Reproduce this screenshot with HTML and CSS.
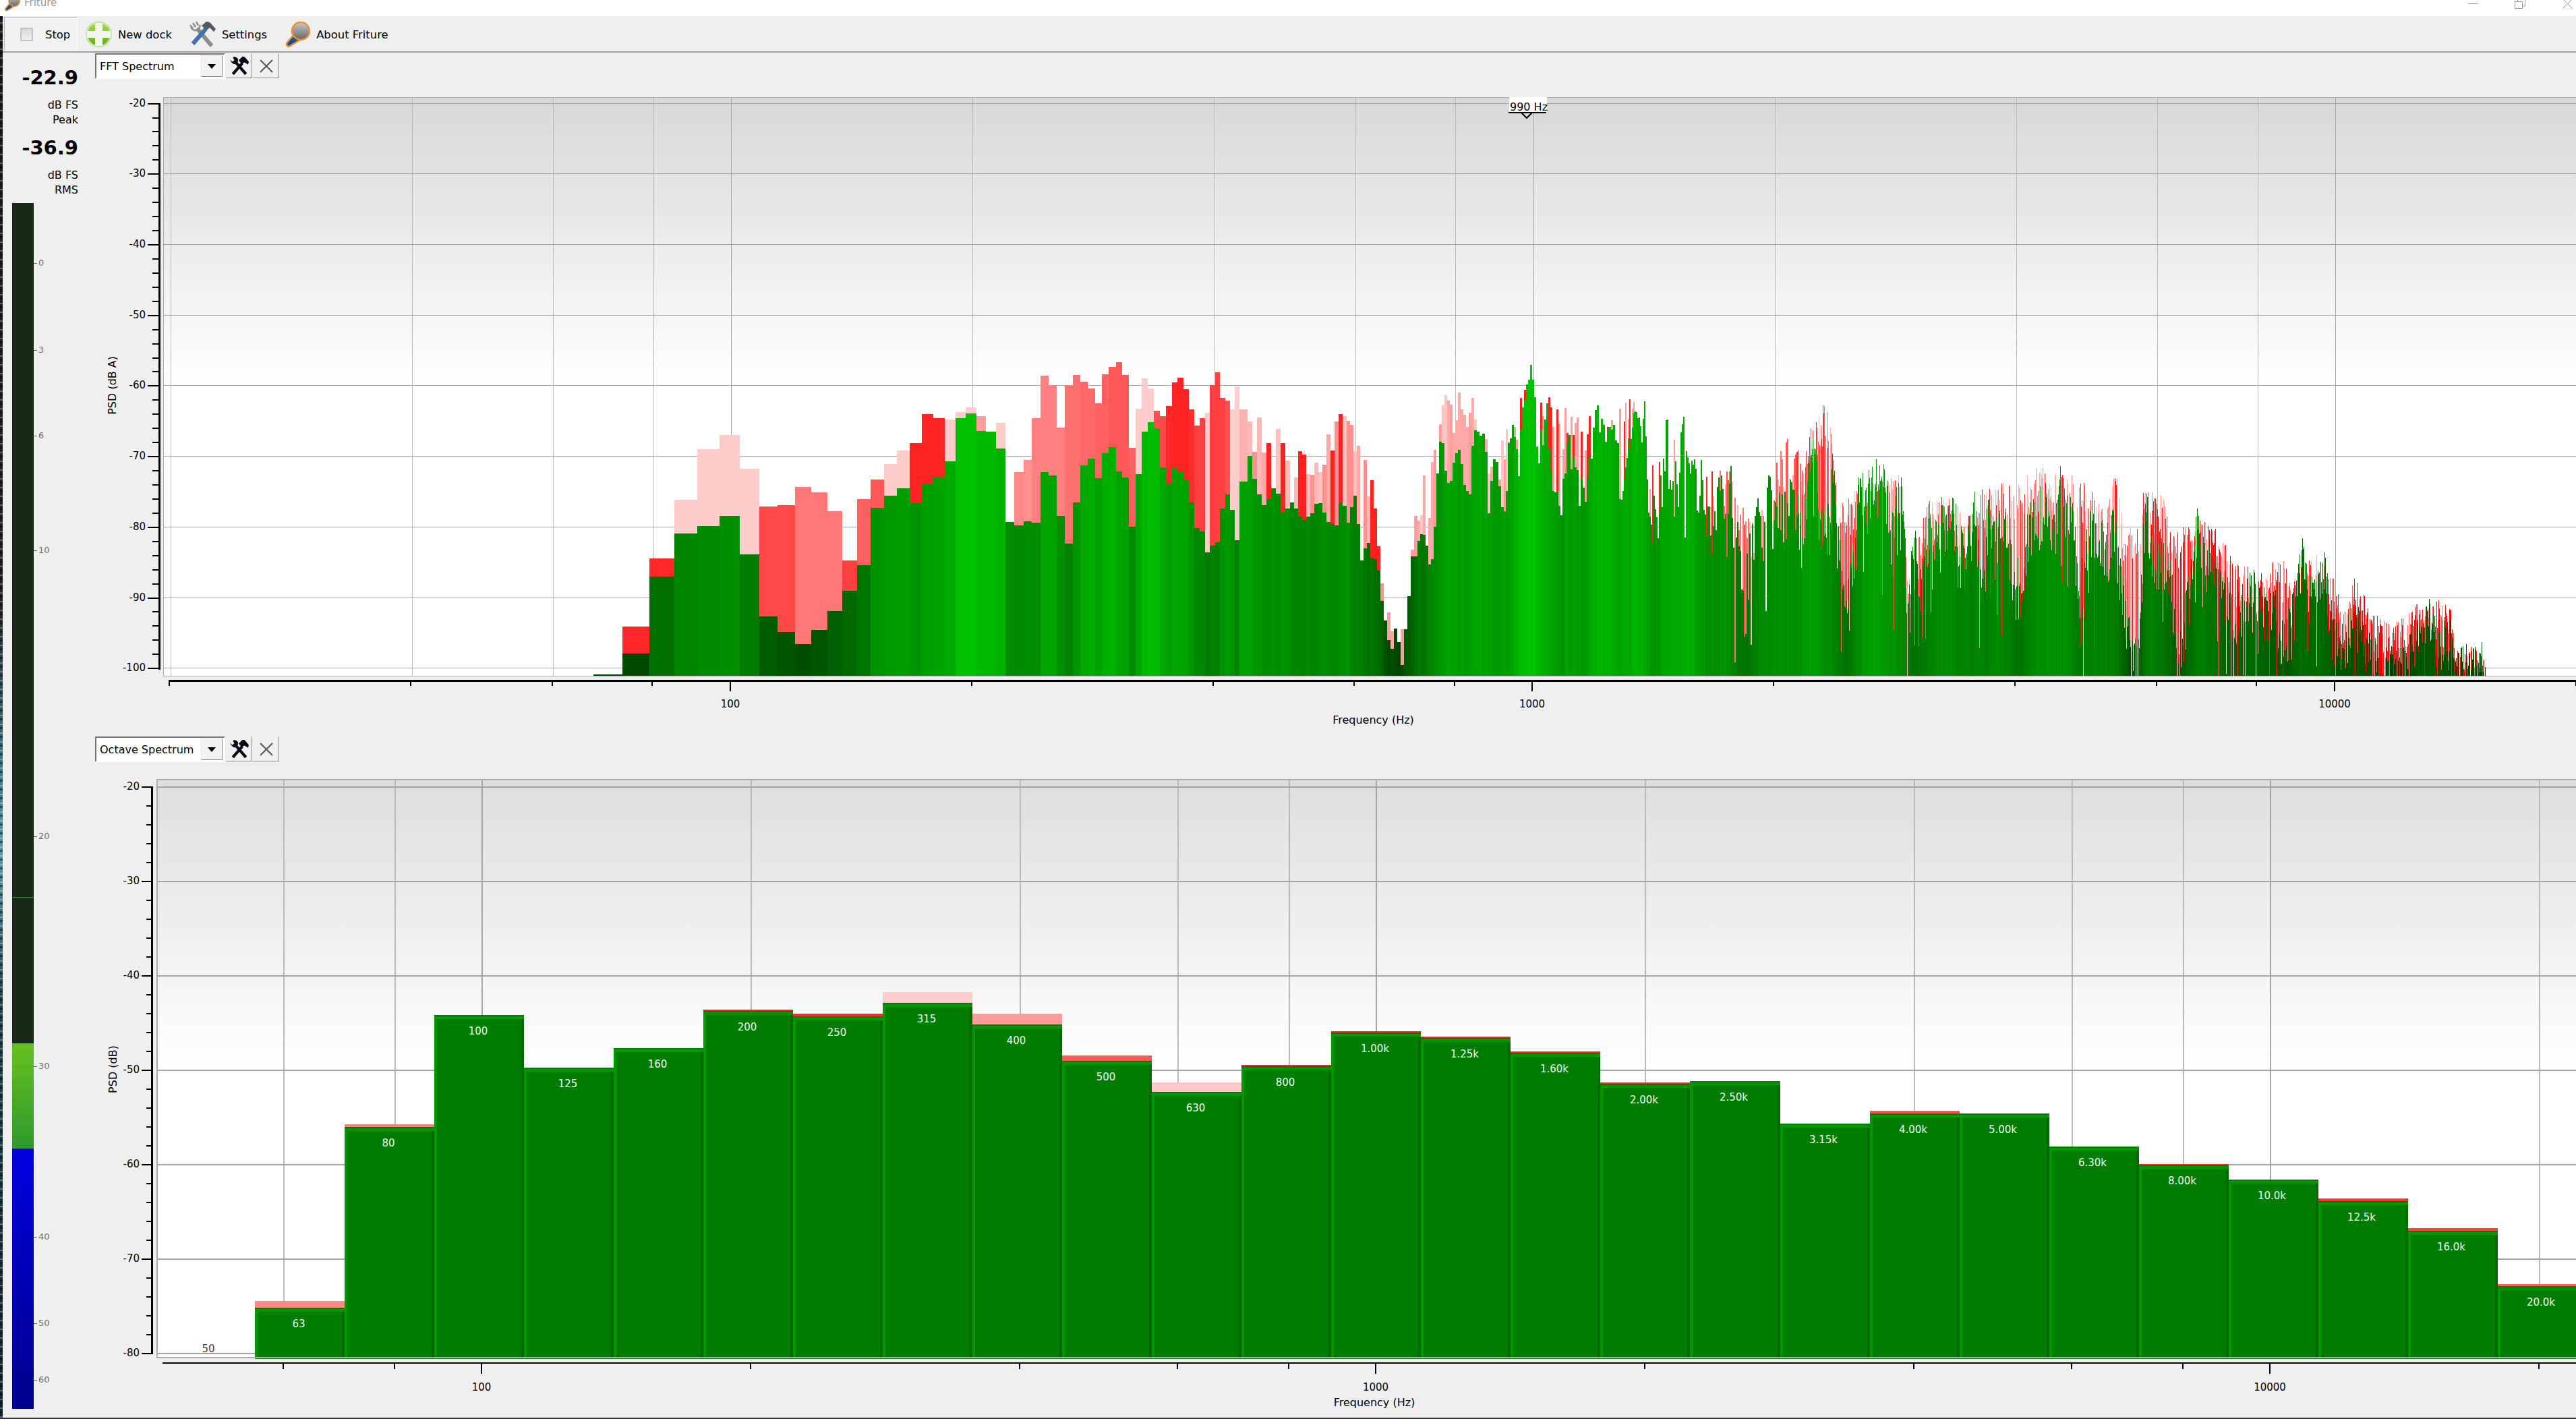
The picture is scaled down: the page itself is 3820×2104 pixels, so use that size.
FILE: index.html
```html
<!DOCTYPE html>
<html lang="en">
<head>
  <meta charset="UTF-8" />
  <title>Friture</title>
  <link rel="stylesheet" href="styles.css">
</head>
<body>
  <svg class="defs" width="0" height="0">
    <symbol id="icon-mic" viewBox="0 0 38 40">
      <path d="M14 20 L3 33 Q2 37 6 38 Q8 38 10 36 L25 27" fill="#1a4f9a" stroke="#f09030" stroke-width="2.5"/>
      <circle cx="24" cy="15" r="13" fill="url(#ball)" stroke="#f09030" stroke-width="2.5"/>
    </symbol>
    <symbol id="icon-tools" viewBox="0 0 26 26">
      <path d="M4 24 L17 9 M22 24 L9 9" fill="none" stroke="currentColor" stroke-width="4"/>
      <path d="M12 5 L17 0 L20 0 L26 7 L25 11 L20 8 L16 10 Z" fill="currentColor"/>
      <path d="M0 4 L3 7 L6 5 L4 1 Q8 -1 11 3 Q12 7 9 10 Q3 12 0 4 Z" fill="currentColor"/>
    </symbol>
    <linearGradient id="ball" x1="0" y1="0" x2="0" y2="1">
      <stop offset="0" stop-color="#c8c8c8"/>
      <stop offset="1" stop-color="#666"/>
    </linearGradient>
    <linearGradient id="plate" x1="0" y1="0" x2="0" y2="1">
      <stop offset="0" stop-color="#a0dc40"/>
      <stop offset="1" stop-color="#62b01c"/>
    </linearGradient>
  </svg>

  <header class="titlebar">
    <svg class="title-icon" width="24" height="25"><use href="#icon-mic"/></svg>
    <span class="title-text">Friture</span>
    <svg class="window-buttons" width="160" height="24" viewBox="0 0 160 24">
      <path d="M0 5.5 H15" stroke="#999" fill="none"/>
      <path d="M69.5 2.5 H80.5 V12.5 H69.5 Z M73.5 2 V-1 M84.5 -1 V9 H81" stroke="#999" fill="none"/>
      <path d="M140 -2 L155 13 M155 -2 L140 13" stroke="#999" fill="none"/>
    </svg>
  </header>

  <div class="workspace">
    <div class="desktop-edge"></div>
    <div class="window">
      <nav class="toolbar">
        <button class="tool tool-checked"><span class="checkbox"></span>Stop</button>
        <button class="tool">
          <svg width="39" height="40" viewBox="0 0 39 40">
            <circle cx="19.5" cy="20" r="19.5" fill="#c8e2a8"/>
            <circle cx="19.5" cy="20" r="16.5" fill="url(#plate)"/>
            <path d="M14 3 H25 V15 H37 V25 H25 V37 H14 V25 H2 V15 H14 Z" fill="#f4f4f0"/>
          </svg>
          New dock
        </button>
        <button class="tool">
          <svg width="39" height="40" viewBox="0 0 39 40">
            <path d="M33 37 L11 11" stroke="#8c8c8c" stroke-width="6"/>
            <path d="M5 34 L24 12" stroke="#3f74b4" stroke-width="6.5"/>
            <path d="M1 6 L5 11 M5 3 L9 9 M10 1 L13 7 M2 9 Q6 17 14 12 L16 6" stroke="#8c8c8c" stroke-width="2.5" fill="none"/>
            <path d="M18 7 L25 1 L30 2 L39 12 L36 16 L30 10 L25 14 Z" fill="#55585c"/>
          </svg>
          Settings
        </button>
        <button class="tool">
          <svg width="38" height="40"><use href="#icon-mic"/></svg>
          About Friture
        </button>
      </nav>

      <div class="panels">
        <aside class="levels">
          <div class="readout">-22.9</div>
          <div class="unit">dB FS<br>Peak</div>
          <div class="readout readout-second">-36.9</div>
          <div class="unit">dB FS<br>RMS</div>
          <div class="meter" id="meter">
            <div class="meter-off"></div>
            <div class="meter-green"></div>
            <div class="meter-blue"></div>
            <div class="meter-mark"></div>
          </div>
        </aside>

        <main class="docks">
          <section class="dock">
            <div class="dock-head">
              <div class="combo">FFT Spectrum<span class="combo-arrow"></span></div>
              <button class="dock-button tools-black"><svg width="28" height="28"><use href="#icon-tools"/></svg></button>
              <button class="dock-button">
                <svg width="24" height="24"><path d="M3 3 L21 21 M21 3 L3 21" stroke="#555" stroke-width="2" fill="none"/></svg>
              </button>
            </div>
            <svg class="chart" id="fft"></svg>
          </section>
          <section class="dock">
            <div class="dock-head">
              <div class="combo">Octave Spectrum<span class="combo-arrow"></span></div>
              <button class="dock-button tools-black"><svg width="28" height="28"><use href="#icon-tools"/></svg></button>
              <button class="dock-button">
                <svg width="24" height="24"><path d="M3 3 L21 21 M21 3 L3 21" stroke="#555" stroke-width="2" fill="none"/></svg>
              </button>
            </div>
            <svg class="chart" id="octave"></svg>
          </section>
        </main>
      </div>
    </div>
  </div>

  <script src="chart.js"></script>
</body>
</html>
```

FILE: styles.css
```css
* {
  box-sizing: border-box;
}

html, body {
  margin: 0;
  height: 100%;
  overflow: hidden;
}

body {
  display: flex;
  flex-direction: column;
  font-family: "DejaVu Sans", Verdana, sans-serif;
  font-size: 16px;
  color: #000;
  background-color: #efefef;
  border-bottom: 2px solid #333;
}

.defs {
  position: absolute;
}

.titlebar {
  display: flex;
  align-items: flex-start;
  height: 24px;
  flex: none;
  background-color: #fff;
  overflow: hidden;
}

.title-icon {
  margin: -8px 0 0 6px;
}

.title-text {
  margin: -5px 0 0 6px;
  font-size: 15px;
  color: #9a9a9a;
}

.window-buttons {
  margin-left: auto;
}

.workspace {
  display: flex;
  flex: 1;
  min-height: 0;
}

.desktop-edge {
  width: 4px;
  flex: none;
  background:
    repeating-linear-gradient(0deg, rgba(255,255,255,0.3) 0 2px, transparent 2px 7px, rgba(0,0,0,0.45) 7px 10px, transparent 10px 13px),
    linear-gradient(to bottom, #1a1a1a 0, #222 42%, #3c7a8a 54%, #5a98a4 60%, #20424e 70%, #10242c 100%);
}

.window {
  display: flex;
  flex-direction: column;
  flex: 1;
  min-width: 0;
}

.toolbar {
  display: flex;
  align-items: stretch;
  height: 54px;
  flex: none;
  padding: 1px 0 0 2px;
  border-bottom: 2px solid #a0a0a0;
}

.tool {
  display: flex;
  align-items: center;
  gap: 9px;
  padding: 1px 13px 0;
  border: none;
  background: none;
  font: inherit;
  font-size: 16.4px;
  color: inherit;
}

.tool-checked {
  gap: 18px;
  width: 109px;
  padding: 1px 0 0 23px;
  margin-right: -1px;
  border: 1px solid #b4b4b4;
  border-right-color: #fafafa;
  border-bottom-color: #fafafa;
  background: repeating-conic-gradient(#f8f8f8 0 25%, #ececec 0 50%) 0 0 / 2px 2px;
}

.checkbox {
  width: 19px;
  height: 20px;
  border: 2px solid #c4c4c4;
  background: linear-gradient(#d8d8d8, #f0f0f0);
}

.panels {
  display: flex;
  flex: 1;
  min-height: 0;
}

.levels {
  display: flex;
  flex-direction: column;
  width: 112px;
  flex: none;
  text-align: right;
}

.readout {
  margin-top: 20px;
  font-size: 29px;
  font-weight: bold;
  line-height: 34px;
}

.readout-second {
  margin-top: 13px;
}

.unit {
  margin-top: 13px;
  font-size: 16px;
  line-height: 22px;
}

.meter {
  position: relative;
  display: flex;
  flex-direction: column;
  width: 32px;
  height: 1788px;
  margin: 8px 0 0 14px;
}

.meter-off {
  height: 1246px;
  background-color: #182916;
}

.meter-green {
  height: 156px;
  background: linear-gradient(#66c01e, #2d9a2d);
}

.meter-blue {
  flex: 1;
  background: linear-gradient(#0000e0, #00008c);
}

.meter-mark {
  position: absolute;
  top: 1029px;
  left: 0;
  width: 32px;
  height: 1px;
  background-color: #3c8a3c;
}

.meter-tick {
  position: absolute;
  left: 32px;
  width: 5px;
  height: 1px;
  background-color: #666;
}

.meter-label {
  position: absolute;
  left: 39px;
  font-size: 13px;
  line-height: 14px;
  color: #6e6e6e;
}

.docks {
  display: flex;
  flex-direction: column;
  flex: 1;
  min-width: 0;
}

.dock {
  display: flex;
  flex-direction: column;
  flex: 1;
  min-height: 0;
}

.dock-head {
  display: flex;
  align-items: flex-start;
  gap: 1px;
  padding: 1px 0 0 25px;
  height: 39px;
  flex: none;
}

.dock + .dock .dock-head {
  height: 40px;
  padding-top: 2px;
}

.combo {
  display: flex;
  align-items: center;
  justify-content: space-between;
  width: 193px;
  height: 38px;
  padding: 0 2px 0 5px;
  border: 2px solid #fff;
  border-top-color: #777;
  border-left-color: #777;
  background-color: #fff;
}

.combo-arrow {
  position: relative;
  width: 32px;
  height: 32px;
  background-color: #f2f2f2;
  border: 1px solid #e8e8e8;
  border-right-color: #888;
  border-bottom-color: #888;
}

.combo-arrow::after {
  content: "";
  position: absolute;
  top: 12px;
  left: 9px;
  border: 6px solid transparent;
  border-top: 7px solid #000;
  border-bottom: none;
}

.dock-button {
  display: flex;
  align-items: center;
  justify-content: center;
  width: 39px;
  height: 37px;
  padding: 0;
  border: 1px solid #eee;
  border-right-color: #888;
  border-bottom-color: #888;
  background-color: #f0f0f0;
}

.tools-black {
  color: #0a0a14;
}

.chart {
  display: block;
  flex: 1;
  width: 100%;
  min-height: 0;
  shape-rendering: crispEdges;
}

.chart text {
  font-family: "DejaVu Sans", Verdana, sans-serif;
  font-size: 15px;
  fill: #000;
}

.chart .axis-title {
  font-size: 16px;
}

.chart .bar-label {
  fill: #eef8ee;
}

.chart .bar-label-empty {
  fill: #444;
}

.chart .marker {
  font-size: 16px;
}
```

FILE: chart.js
```js
// spectrum plots, coordinates are window pixels (viewBox follows the svg's place on the page)

function rect(x, y, w, h, fill) {
  return `<rect x="${x}" y="${y}" width="${w}" height="${h}" fill="${fill}"/>`;
}

function label(x, y, text, anchor, cls) {
  return `<text x="${x}" y="${y}" text-anchor="${anchor}" dominant-baseline="central" class="${cls || ""}">${text}</text>`;
}

function setup(id) {
  const svg = document.getElementById(id);
  const r = svg.getBoundingClientRect();
  svg.setAttribute("viewBox", `${r.left} ${r.top} ${r.width} ${r.height}`);
  return svg;
}

function drawFrame(c) {
  let s = "";
  s += `<defs><linearGradient id="bg-${c.id}" x1="0" y1="0" x2="0" y2="1">
    <stop offset="0" stop-color="${c.topShade}"/><stop offset="0.5" stop-color="#fff"/></linearGradient></defs>`;
  s += rect(c.left, c.top, 3820 - c.left, c.bottom - c.top, `url(#bg-${c.id})`);

  c.ticks.forEach(t => {
    const x = Math.round(c.fx(t));
    const major = t === 100 || t === 1000 || t === 10000;
    s += rect(x, c.top, c.gridW, c.bottom - c.top, major ? "#a6a6a6" : "#bababa");
  });
  for (let db = c.dbTop; db >= c.dbBottom; db -= 10) {
    s += rect(c.left, Math.round(c.dy(db)), 3820 - c.left, c.gridW, "#a4a4a4");
  }
  return s;
}

function drawAxes(c) {
  let s = "";
  // plot border
  s += rect(c.left, c.top, 3820 - c.left, c.frameW, "#aaa");
  s += rect(c.left, c.top, c.frameW, c.bottom - c.top, "#aaa");
  s += rect(c.left, c.bottom, 3820 - c.left, c.frameW, "#aaa");

  // left scale
  s += rect(c.axisX, Math.round(c.dy(c.dbTop)), 3, Math.round(c.dy(c.dbBottom) - c.dy(c.dbTop)) + 2, "#000");
  for (let db = c.dbTop; db >= c.dbBottom; db -= 2) {
    const y = Math.round(c.dy(db));
    const major = db % 10 === 0;
    const len = major ? c.tickMajor : c.tickMinor;
    s += rect(c.axisX - len, y, len, 2, "#000");
    if (major) s += label(c.axisX - c.tickMajor - 3, y, db, "end");
  }
  s += `<text class="axis-title" text-anchor="middle" dominant-baseline="central"
    transform="translate(${c.titleX} ${c.dy((c.dbTop + c.dbBottom) / 2)}) rotate(-90)">${c.yTitle}</text>`;

  // bottom scale
  s += rect(c.axisStart, c.axisY, 3820 - c.axisStart, c.axisH, "#000");
  c.ticks.forEach(t => {
    const x = Math.round(c.fx(t) + c.tickShift);
    const major = t === 100 || t === 1000 || t === 10000;
    s += rect(x, c.axisY, 2, major ? c.freqMajor : c.freqMinor, "#000");
    if (major) s += label(x + 1, c.freqLabelY, t, "middle");
  });
  s += label(c.fx(1000) + c.freqTitleShift, c.freqTitleY, "Frequency (Hz)", "middle", "axis-title");
  return s;
}

function greenAt(y) {
  const g = Math.round(74 + 0.338 * (969 - y));
  return `rgb(0,${Math.max(60, Math.min(210, g))},0)`;
}

function interp(points, x) {
  if (x <= points[0][0]) return points[0][1];
  for (let i = 1; i < points.length; i++) {
    if (x <= points[i][0]) {
      const a = points[i - 1], b = points[i];
      return a[1] + (b[1] - a[1]) * (x - a[0]) / (b[0] - a[0]);
    }
  }
  return points[points.length - 1][1];
}

let seed = 20417;
function rnd() {
  seed = (seed * 1664525 + 1013904223) % 4294967296;
  return seed / 4294967296;
}

// ---------- FFT spectrum ----------

const LIGHT = "#ffcccc";

// low bins: [right edge, green top, peak top, peak colour], read in a 1000x560 crop stretched to 1568
const lowBins = [
  [114, 1401, 1403, "#ff4040"],
  [177, 1313, 1201, "#ff2828"], [235, 994, 918, "#ff2828"], [289, 815, 675, LIGHT], [340, 784, 465, LIGHT],
  [387, 742, 406, LIGHT], [433, 902, 546, LIGHT], [475, 1159, 703, "#ff4848"], [516, 1224, 697, "#ff4848"],
  [554, 1274, 622, "#ff7878"], [591, 1215, 644, "#ff7878"], [626, 1137, 722, "#ff7878"], [660, 1053, 927, "#ff4040"],
  [691, 946, 672, "#ff6060"], [723, 708, 591, "#ff5858"], [753, 658, 526, LIGHT], [782, 627, 470, LIGHT],
  [811, 689, 440, "#ff2424"], [837, 608, 319, "#ff2424"], [864, 580, 336, "#ff2424"], [889, 515, 342, LIGHT],
  [913, 336, 311, LIGHT], [938, 316, 291, LIGHT], [960, 389, 328, "#ffa0a0"], [983, 392, 392, LIGHT],
  [1005, 462, 356, LIGHT], [1025, 767, 767, LIGHT], [1047, 781, 560, "#ff8888"], [1066, 764, 510, "#ff9090"],
  [1087, 770, 336, "#ff8080"], [1105, 560, 160, "#ff8080"], [1124, 574, 203, "#ff8080"], [1143, 742, 375, "#ff8080"],
  [1162, 857, 203, "#ff7070"], [1179, 686, 157, "#ff7070"], [1196, 532, 185, "#ff6868"], [1214, 504, 213, "#ff6868"],
  [1229, 585, 274, "#ff6060"], [1245, 482, 154, "#ff6060"], [1262, 456, 123, "#ff5858"], [1276, 557, 104, "#ff5858"],
  [1292, 582, 157, "#ff5858"], [1308, 787, 459, "#ff6060"], [1322, 568, 297, LIGHT], [1336, 392, 171, LIGHT],
  [1350, 353, 213, LIGHT], [1364, 378, 305, "#ff5050"], [1378, 540, 328, "#ff4848"], [1392, 609, 286, "#ff2828"],
  [1405, 543, 188, "#ff2424"], [1419, 557, 168, "#ff2424"], [1432, 594, 216, "#ff2424"], [1444, 686, 300, "#ff2c2c"],
  [1457, 792, 367, "#ff4040"], [1469, 806, 336, "#ff4040"], [1480, 893, 314, LIGHT], [1493, 865, 199, "#ff4040"],
  [1504, 851, 146, "#ff4040"], [1516, 711, 252, "#ff4040"], [1527, 652, 263, "#ff5050"], [1538, 717, 300, LIGHT],
  [1549, 843, 204, LIGHT], [1568, 600, 300, "#ffb0b0"]
];

// green envelope around 1 kHz, same sort of crop starting at x=1900
const midGreen = [
  [-78,500],[-60,640],[-40,700],[-20,600],[0,748],[16,680],[33,720],[44,778],[63,720],[72,755],[80,665],[90,678],[100,772],[116,787],
  [124,760],[132,690],[140,650],[150,784],[157,735],[166,634],[172,678],[180,905],[188,912],[196,804],[204,890],
  [212,902],[220,902],[226,1078],[234,1100],[241,1215],[248,1252],[256,1300],[262,1212],[270,1258],[276,1400],[284,1222],
  [290,1190],[296,952],[304,890],[310,920],[317,845],[323,818],[332,832],[338,896],[344,965],[350,882],[356,728],
  [362,510],[368,420],[376,428],[382,627],[390,600],[398,515],[406,448],[412,458],[420,582],[428,632],[436,632],
  [440,468],[450,367],[456,408],[464,408],[468,400],[474,480],[478,756],[490,500],[498,498],[505,630],[512,717],
  [520,733],[526,435],[532,412],[536,367],[542,415],[550,548],[556,375],[562,264],[568,215],[576,132],[584,140],
  [590,317],[596,510],[602,400],[608,462],[614,240],[620,395],[628,620],[636,620],[640,640],[648,780],[654,605],
  [660,487],[666,385],[672,518],[680,520],[686,530],[692,735],[698,545],[706,695],[714,495],[722,445],[730,258],
  [736,330],[744,365],[752,398],[760,362],[770,385],[780,370],[786,685],[796,590],[806,425],[812,420],[820,310],
  [830,345],[836,412],[844,270],[850,585],[856,765],[864,665],[872,640],[880,635],[890,360],[898,365],[906,650],
  [914,500],[922,430],[930,420],[936,283],[944,350],[952,490],[960,525],[968,600],[976,415],[984,690],[990,725],
  [996,730],[1004,730],[1012,630],[1020,540],[1028,680],[1036,730],[1044,555],[1052,830],[1060,770],[1068,810],
  [1076,1130],[1084,850],[1092,810],[1100,680],[1108,660],[1116,820],[1124,790],[1130,515],[1138,650],[1146,720],
  [1154,680],[1162,640],[1172,650],[1180,640],[1186,580],[1196,650],[1204,690],[1212,820],[1220,640],[1228,365],
  [1236,375],[1244,515],[1252,720],[1260,725],[1268,720],[1276,720],[1282,457],[1290,720],[1300,900],[1310,1090],
  [1316,960],[1330,830],[1346,535],[1358,596],[1376,510],[1394,545],[1405,565],[1420,740],[1432,590],[1448,620],
  [1452,960],[1460,1060],[1470,720],[1484,1000],[1500,810],[1516,720],[1540,680],[1560,690]
];

const midPeak = [
  [-78,290],[-60,300],[-40,420],[-20,340],[0,412],[90,403],[157,250],[190,400],[220,740],[240,1085],[290,1145],[310,577],[344,568],[368,207],
  [436,225],[470,362],[500,490],[536,283],[584,132],[640,245],[680,335],[722,250],[775,283],[823,240],[850,585],
  [906,345],[950,490],[996,545],[1044,535],[1076,730],[1116,700],[1146,510],[1176,420],[1212,490],[1268,230],
  [1290,600],[1320,640],[1400,590],[1435,560],[1460,1010],[1500,670],[1568,620]
];

// top end, crop starting at (2900,600)
const highGreen = [
  [0,470],[20,620],[50,400],[60,680],[85,420],[100,560],[127,380],[145,740],[170,680],[183,480],[205,430],[225,360],
  [250,500],[265,290],[280,400],[300,450],[310,800],[330,600],[340,430],[360,520],[380,570],[400,470],[415,690],
  [430,870],[460,1130],[478,385],[490,500],[500,610],[525,610],[545,750],[560,1030],[580,860],[600,640],[612,445],
  [630,570],[645,660],[660,710],[675,800],[700,900],[720,850],[745,680],[770,830],[805,840],[830,1000],[850,880],
  [877,605],[890,770],[905,800],[935,665],[945,930],[960,990],[980,1000],[1010,890],[1025,960],[1050,1050],
  [1075,1100],[1100,1100],[1130,1110],[1150,1020],[1165,1000],[1185,880],[1200,880],[1220,1000],[1250,940],
  [1262,1150],[1285,1080],[1310,1080],[1336,1075],[1345,1205]
];

const highPeak = [
  [0,415],[20,540],[60,380],[183,305],[205,270],[225,280],[330,330],[380,490],[400,245],[430,590],[478,375],
  [525,410],[545,590],[600,505],[645,530],[675,590],[700,700],[770,740],[805,695],[830,695],[850,800],[890,635],
  [935,680],[980,900],[1010,760],[1050,920],[1100,980],[1150,915],[1185,850],[1250,880],[1262,1080],[1310,1070],[1345,1158]
];

const peakZones = [
  [2050, 0.95, ["#ffa8a8", "#ffc0c0", "#ff9090", "#ffb8b8", "#ff2020"]],
  [2240, 0.85, ["#ff9c9c", "#ffa8a8", "#ffc4c4"]],
  [2440, 0.6, ["#ff9c9c", "#ff2020", "#ffa0a0"]],
  [2550, 0.35, ["#ff2020", "#ff9c9c", "#ffb4b4"]],
  [2650, 0.8, ["#ff5050", "#ff7070", "#ffb0b0"]],
  [2900, 0.8, ["#ff5050", "#ff6060", "#ff3030", "#ffb0b0"]],
  [3180, 0.7, ["#ffb0b0", "#ff8080", "#ff2020"]],
  [3450, 0.8, ["#ff8080", "#ffb0b0", "#ff2020", "#ff0000"]],
  [3800, 0.95, ["#ff0000", "#ff1818", "#ff6060"]]
];

function toMidPoint(p) {
  return [1900 + p[0] * 0.6378, 500 + p[1] * 0.3571];
}
function toHighPoint(p) {
  return [2900 + p[0] * 0.5867, 600 + p[1] / 3];
}

function noiseAmp(x) {
  if (x < 2250) return 12;
  if (x < 2450) return 28;
  if (x < 2900) return 85;
  if (x < 3400) return 95;
  return 75;
}

function drawFft() {
  const svg = setup("fft");
  const c = {
    id: "fft", topShade: "#d8d8d8", left: 242, top: 144, bottom: 1002, gridW: 1, frameW: 1,
    fx: f => 1084 + 1189.5 * Math.log10(f / 100),
    dy: db => 152.6 + (-20 - db) * 10.47,
    dbTop: -20, dbBottom: -100,
    ticks: [20, 40, 60, 80, 100, 200, 400, 600, 800, 1000, 2000, 4000, 6000, 8000, 10000, 20000],
    axisX: 235, tickMajor: 16, tickMinor: 9, titleX: 166, yTitle: "PSD (dB A)",
    axisStart: 251, axisY: 1008, axisH: 3, tickShift: -2.5, freqMajor: 17, freqMinor: 9,
    freqLabelY: 1044, freqTitleY: 1067, freqTitleShift: -237
  };
  let s = drawFrame(c);
  let peaks = "", greens = "";

  // measured bins below 1.8 kHz
  let prev = 850 + 47 * 0.6378;
  lowBins.forEach(b => {
    const right = Math.round(850 + b[0] * 0.6378);
    const x = Math.round(prev);
    const g = 500 + b[1] * 0.3571, p = 500 + b[2] * 0.3571;
    peaks += rect(x, Math.round(p), right - x, 1002 - Math.round(p), b[3]);
    greens += rect(x, Math.round(g), right - x, 1002 - Math.round(g), greenAt(g));
    prev = right;
  });

  // generated bins from there on, getting thinner like linear FFT bins on a log axis
  const gEnv = midGreen.map(toMidPoint).filter(p => p[0] < 2900).concat(highGreen.map(toHighPoint));
  const pEnv = midPeak.map(toMidPoint).filter(p => p[0] < 2900).concat(highPeak.map(toHighPoint));
  const endX = 3689;
  let x = Math.round(prev);
  while (x < endX) {
    const f = 100 * Math.pow(10, (x - 1084) / 1189.5);
    const w = Math.max(1, Math.round(3200 / f));
    const amp = noiseAmp(x);
    let gTop = interp(gEnv, x) + amp * Math.pow(rnd(), 1.5) - amp * (x > 2450 ? 0.12 : 0.3);
    if (x > 2450 && rnd() < 0.1) gTop += 150 * rnd();
    gTop = Math.round(Math.min(1002, gTop));

    let mean = 0;
    for (let i = -12; i <= 12; i += 4) mean += interp(gEnv, x + i);
    const shade = greenAt(mean / 7 + 25 + (rnd() - 0.5) * 36);

    const zone = peakZones.find(z => x < z[0]);
    if (rnd() < zone[1]) {
      const pTop = Math.round(interp(pEnv, x) + 70 * Math.pow(rnd(), 1.4));
      const col = zone[2][Math.floor(rnd() * zone[2].length)];
      peaks += rect(x, pTop, w, 1002 - pTop, col);
    }
    greens += rect(x, gTop, w, 1002 - gTop, shade);
    x += w;
  }

  s += peaks + greens + drawAxes(c);

  // cursor tag over the plot
  s += rect(2238, 144, 56, 22, "#fff");
  s += label(2267, 158, "990 Hz", "middle", "marker");
  s += rect(2237, 166, 56, 2, "#000");
  s += `<path d="M2256 167 L2264 175 L2272 167" fill="none" stroke="#000" stroke-width="2" shape-rendering="auto"/>`;
  svg.innerHTML = s;
}

// ---------- octave spectrum ----------

// [label, green top, peak top, peak colour]
const bands = [
  ["63", 1939, 1929, "#ff8888"], ["80", 1671, 1667, "#ff8080"], ["100", 1505], ["125", 1583], ["160", 1554],
  ["200", 1499, 1497, "#ff2020"], ["250", 1507, 1503, "#ff2828"], ["315", 1487, 1471, "#ffcccc"],
  ["400", 1519, 1503, "#ff9c9c"], ["500", 1573, 1565, "#ff5858"], ["630", 1619, 1605, "#ffc8c8"],
  ["800", 1581, 1579, "#ff2020"], ["1.00k", 1531, 1529, "#ff2020"], ["1.25k", 1539, 1537, "#ff2020"],
  ["1.60k", 1561, 1559, "#ff2020"], ["2.00k", 1607, 1605, "#ff2020"], ["2.50k", 1603], ["3.15k", 1666],
  ["4.00k", 1651, 1647, "#ff5050"], ["5.00k", 1651], ["6.30k", 1700], ["8.00k", 1727, 1726, "#ff3030"],
  ["10.0k", 1749], ["12.5k", 1781, 1777, "#ff3030"], ["16.0k", 1825, 1821, "#ff4040"], ["20.0k", 1907, 1904, "#ff6060"]
];

function drawOctave() {
  const svg = setup("octave");
  const c = {
    id: "octave", topShade: "#dedede", left: 232, top: 1155, bottom: 2012, gridW: 2, frameW: 2,
    fx: f => 714 + 1326 * Math.log10(f / 100),
    dy: db => 1165.5 + (-20 - db) * 14,
    dbTop: -20, dbBottom: -80,
    ticks: [60, 80, 100, 200, 400, 600, 800, 1000, 2000, 4000, 6000, 8000, 10000, 20000],
    axisX: 224, tickMajor: 14, tickMinor: 7, titleX: 167, yTitle: "PSD (dB)",
    axisStart: 241, axisY: 2020, axisH: 2, tickShift: -1, freqMajor: 17, freqMinor: 10,
    freqLabelY: 2057, freqTitleY: 2079, freqTitleShift: -2
  };
  let s = drawFrame(c);
  const binW = 133.03;

  bands.forEach((b, i) => {
    const x = Math.round(378 + i * binW);
    const w = Math.round(378 + (i + 1) * binW) - x;
    const top = b[1];
    if (b[2]) s += rect(x, b[2], w, top - b[2], b[3]);
    s += rect(x, top, w, 2015 - top, "#007c00");
    s += rect(x, top + 2, w, 4, "#009800");
    s += rect(x, top + 2, 4, 2015 - top - 2, "#009800");
    s += rect(x + w - 4, top + 6, 4, 2015 - top - 6, "#006a00");
  });

  s += drawAxes(c);

  bands.forEach((b, i) => {
    s += label(Math.round(378 + (i + 0.5) * binW) - 2, b[1] + 24, b[0], "middle", "bar-label");
  });
  s += label(309, 2000, "50", "middle", "bar-label-empty");
  svg.innerHTML = s;
}

// ---------- level meter scale ----------

function drawMeterScale() {
  const meter = document.getElementById("meter");
  const marks = [[0, 390], [3, 519], [6, 646], [10, 816], [20, 1240], [30, 1581], [40, 1834], [50, 1962], [60, 2046]];
  marks.forEach(m => {
    const y = m[1] - 301;
    const tick = document.createElement("div");
    tick.className = "meter-tick";
    tick.style.top = `${y}px`;
    const text = document.createElement("div");
    text.className = "meter-label";
    text.style.top = `${y - 7}px`;
    text.textContent = m[0];
    meter.appendChild(tick);
    meter.appendChild(text);
  });
}

drawFft();
drawOctave();
drawMeterScale();
```
